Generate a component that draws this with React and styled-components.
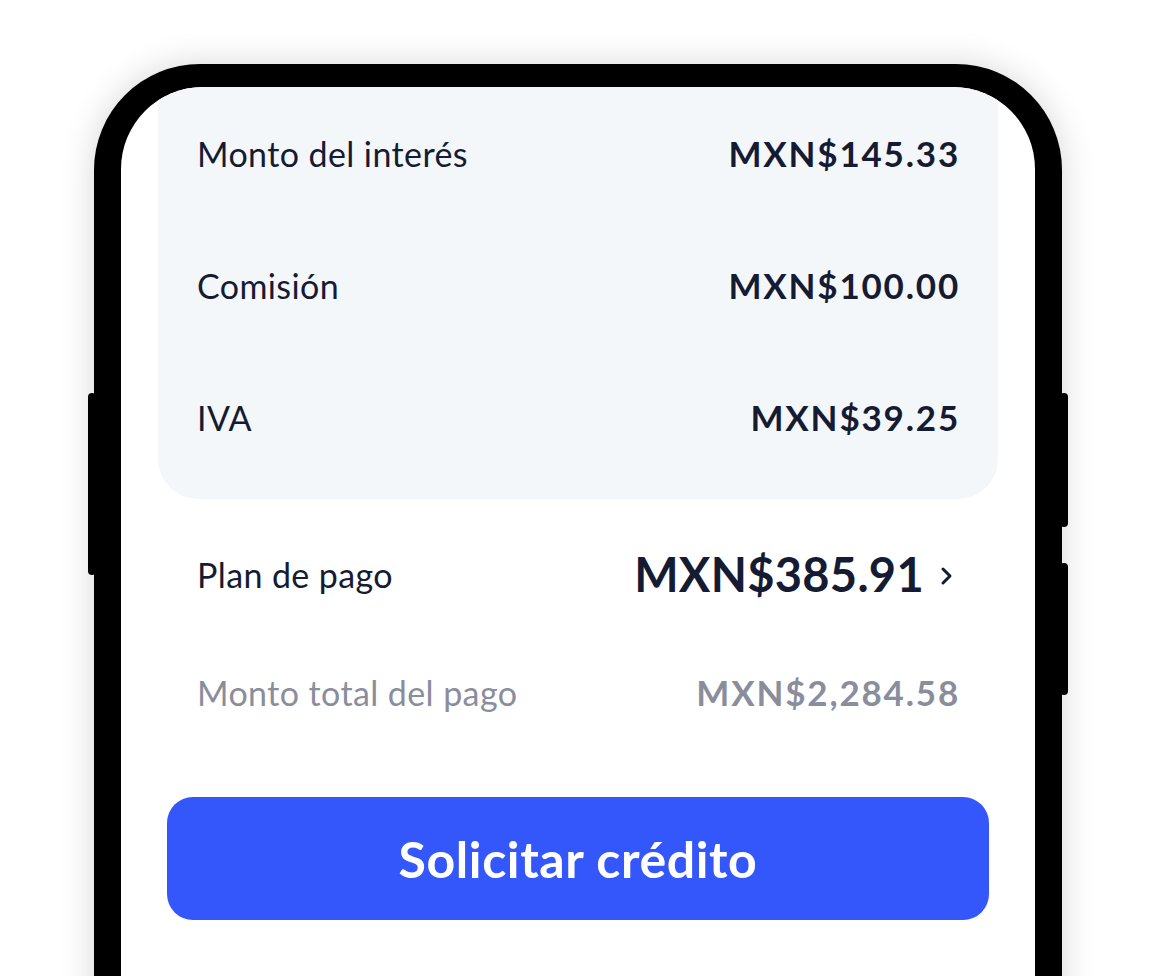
import React from "react";
import styled, { createGlobalStyle } from "styled-components";

const GlobalStyle = createGlobalStyle`
  html, body {
    margin: 0;
    padding: 0;
    background: #ffffff;
    overflow: hidden;
  }
  * { box-sizing: border-box; }
`;

const Page = styled.div`
  width: 1156px;
  height: 976px;
  overflow: hidden;
  background: #ffffff;
  padding: 64px 0 0 94px;
  font-family: "Lato", "Noto Sans", sans-serif;
`;

const PhoneFrame = styled.div`
  position: relative;
  width: 968px;
  height: 1000px;
  background: #000000;
  border-radius: 106px 106px 0 0;
  padding: 23px 27px 0;
  box-shadow: 0 0 34px rgba(0, 0, 0, 0.16);
`;

const SideButton = styled.div`
  position: absolute;
  top: ${(p) => p.$top}px;
  height: ${(p) => p.$height}px;
  width: 8px;
  background: #000000;
  border-radius: 4px;
  ${(p) => (p.$side === "left" ? "left: -6px;" : "right: -6px;")}
`;

const Screen = styled.div`
  height: 100%;
  background: #ffffff;
  border-radius: 82px 82px 0 0;
  overflow: hidden;
  padding: 0 37px;
  display: flex;
  flex-direction: column;
`;

const Card = styled.div`
  background: #f4f7f9;
  border-radius: 0 0 40px 40px;
  padding: 0 38px 16px 39px;
`;

const Row = styled.div`
  display: flex;
  align-items: center;
  justify-content: space-between;
  height: ${(p) => p.$height || 132}px;
`;

const OuterRow = styled(Row)`
  padding: 0 38px 0 39px;
  margin-top: ${(p) => p.$mt}px;
`;

const Label = styled.span`
  font-size: 34px;
  color: ${(p) => (p.$muted ? "#8a8e9c" : "#151b33")};
  letter-spacing: 0.4px;
`;

const Value = styled.span`
  font-size: ${(p) => p.$size || 35}px;
  font-weight: 700;
  color: ${(p) => (p.$muted ? "#8a8e9c" : "#151b33")};
  letter-spacing: ${(p) => (p.$size ? 0.3 : 1.8)}px;
`;

const ValueGroup = styled.div`
  display: flex;
  align-items: center;
  gap: 16px;
  margin-right: 6px;
`;

const Chevron = styled.svg`
  width: 14px;
  height: 20px;
  margin-top: 4px;
`;

const PrimaryButton = styled.button`
  margin: 75px 9px 0;
  height: 123px;
  border: none;
  border-radius: 26px;
  background: #3457fb;
  color: #ffffff;
  font-family: "Lato", "Noto Sans", sans-serif;
  font-size: 50px;
  font-weight: 700;
  letter-spacing: 0.6px;
  cursor: pointer;
`;

const breakdown = [
  { label: "Monto del interés", value: "MXN$145.33" },
  { label: "Comisión", value: "MXN$100.00" },
  { label: "IVA", value: "MXN$39.25" },
];

export default function App() {
  return (
    <>
      <GlobalStyle />
      <Page>
        <PhoneFrame>
          <SideButton $side="left" $top={329} $height={182} />
          <SideButton $side="right" $top={329} $height={134} />
          <SideButton $side="right" $top={499} $height={132} />
          <Screen>
            <Card>
              {breakdown.map((r) => (
                <Row key={r.label}>
                  <Label>{r.label}</Label>
                  <Value>{r.value}</Value>
                </Row>
              ))}
            </Card>
            <OuterRow $height={90} $mt={30}>
              <Label>Plan de pago</Label>
              <ValueGroup>
                <Value $size={47}>MXN$385.91</Value>
                <Chevron viewBox="0 0 14 20" fill="none">
                  <polyline
                    points="3,3 10,10 3,17"
                    stroke="#151b33"
                    strokeWidth="3"
                    strokeLinecap="round"
                    strokeLinejoin="round"
                  />
                </Chevron>
              </ValueGroup>
            </OuterRow>
            <OuterRow $height={60} $mt={43}>
              <Label $muted>Monto total del pago</Label>
              <Value $muted>MXN$2,284.58</Value>
            </OuterRow>
            <PrimaryButton>Solicitar crédito</PrimaryButton>
          </Screen>
        </PhoneFrame>
      </Page>
    </>
  );
}
